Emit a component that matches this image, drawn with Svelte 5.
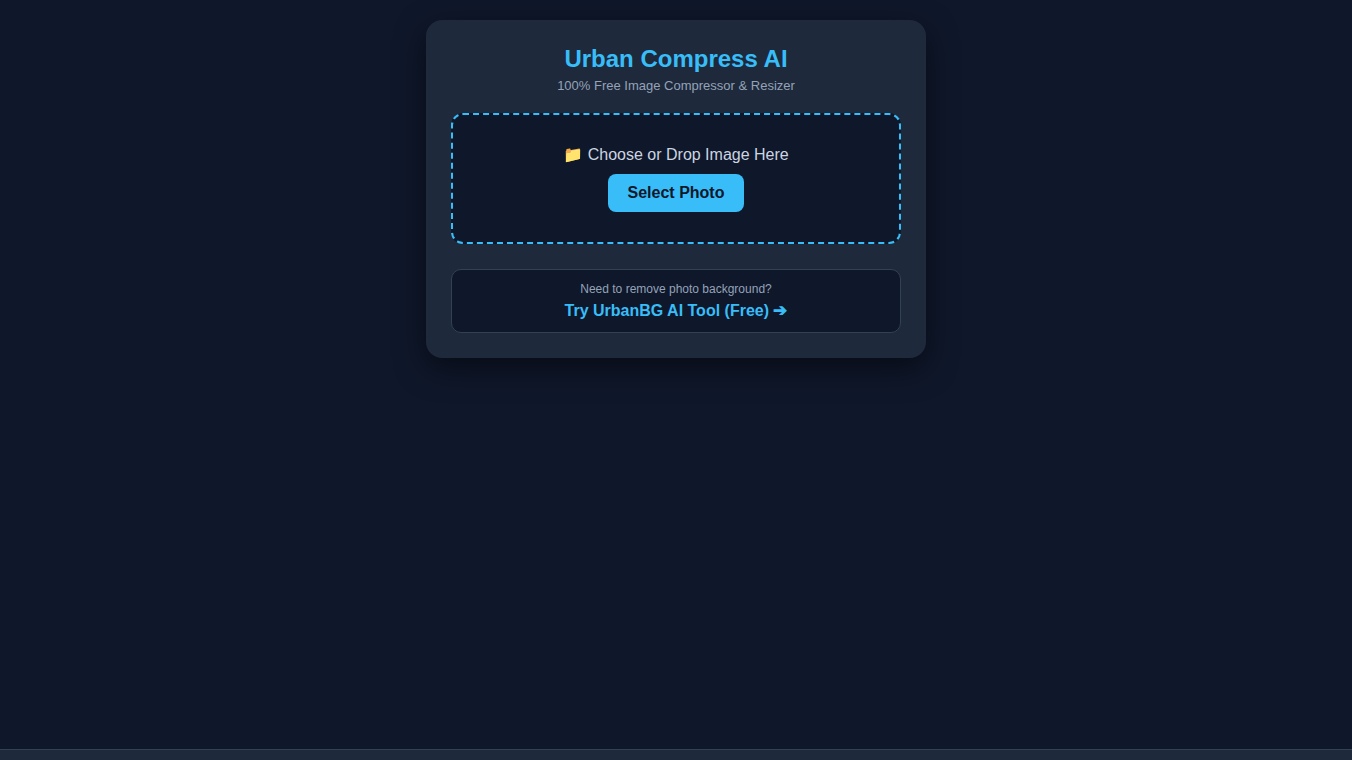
<script lang="ts">
  const promoUrl = '#';
</script>

<div class="page">
  <main class="main">
    <section class="card">
      <h1>Urban Compress AI</h1>
      <p class="sub">100% Free Image Compressor &amp; Resizer</p>

      <div class="drop">
        <div class="drop-label">📁 Choose or Drop Image Here</div>
        <button type="button" class="select">Select Photo</button>
      </div>

      <div class="promo">
        <p>Need to remove photo background?</p>
        <a href={promoUrl}>Try UrbanBG AI Tool (Free) <span class="arrow">➔</span></a>
      </div>
    </section>
  </main>
  <div class="bar"></div>
</div>

<style>
  :global(body) {
    margin: 0;
    background: #0f172a;
  }
  .page {
    min-height: 100vh;
    display: flex;
    flex-direction: column;
    font-family: "Liberation Sans", Arial, sans-serif;
    color: #cbd5e1;
  }
  .main {
    flex: 1;
    display: flex;
    justify-content: center;
    align-items: flex-start;
    padding-top: 20px;
  }
  .card {
    width: 500px;
    box-sizing: border-box;
    padding: 25px;
    background: #1e293b;
    border-radius: 16px;
    box-shadow: 0 10px 30px rgba(0, 0, 0, 0.5);
    text-align: center;
  }
  h1 {
    margin: 0;
    font-size: 24px;
    font-weight: 700;
    line-height: 28px;
    color: #38bdf8;
  }
  .sub {
    margin: 5px 0 20px;
    font-size: 13px;
    line-height: 15px;
    color: #94a3b8;
  }
  .drop {
    padding: 30px;
    background: #0f172a;
    border: 2px dashed #38bdf8;
    border-radius: 12px;
  }
  .drop-label {
    font-size: 16px;
    line-height: 20px;
    color: #cbd5e1;
  }
  .select {
    display: block;
    margin: 9px auto 0;
    height: 38px;
    padding: 0 20px;
    border: 0;
    border-radius: 8px;
    background: #38bdf8;
    color: #0f172a;
    font: 700 16px "Liberation Sans", Arial, sans-serif;
  }
  .promo {
    margin-top: 25px;
    padding: 12px;
    background: #0f172a;
    border: 1px solid #334155;
    border-radius: 10px;
  }
  .promo p {
    margin: 0 0 6px;
    font-size: 12px;
    line-height: 14px;
    color: #94a3b8;
  }
  .promo a {
    display: block;
    font-size: 16px;
    font-weight: 700;
    line-height: 18px;
    color: #38bdf8;
    text-decoration: none;
  }
  .arrow {
    font-size: 17px;
    line-height: 0;
  }
  .bar {
    height: 10px;
    background: #1e293b;
    border-top: 1px solid #334155;
  }
</style>
